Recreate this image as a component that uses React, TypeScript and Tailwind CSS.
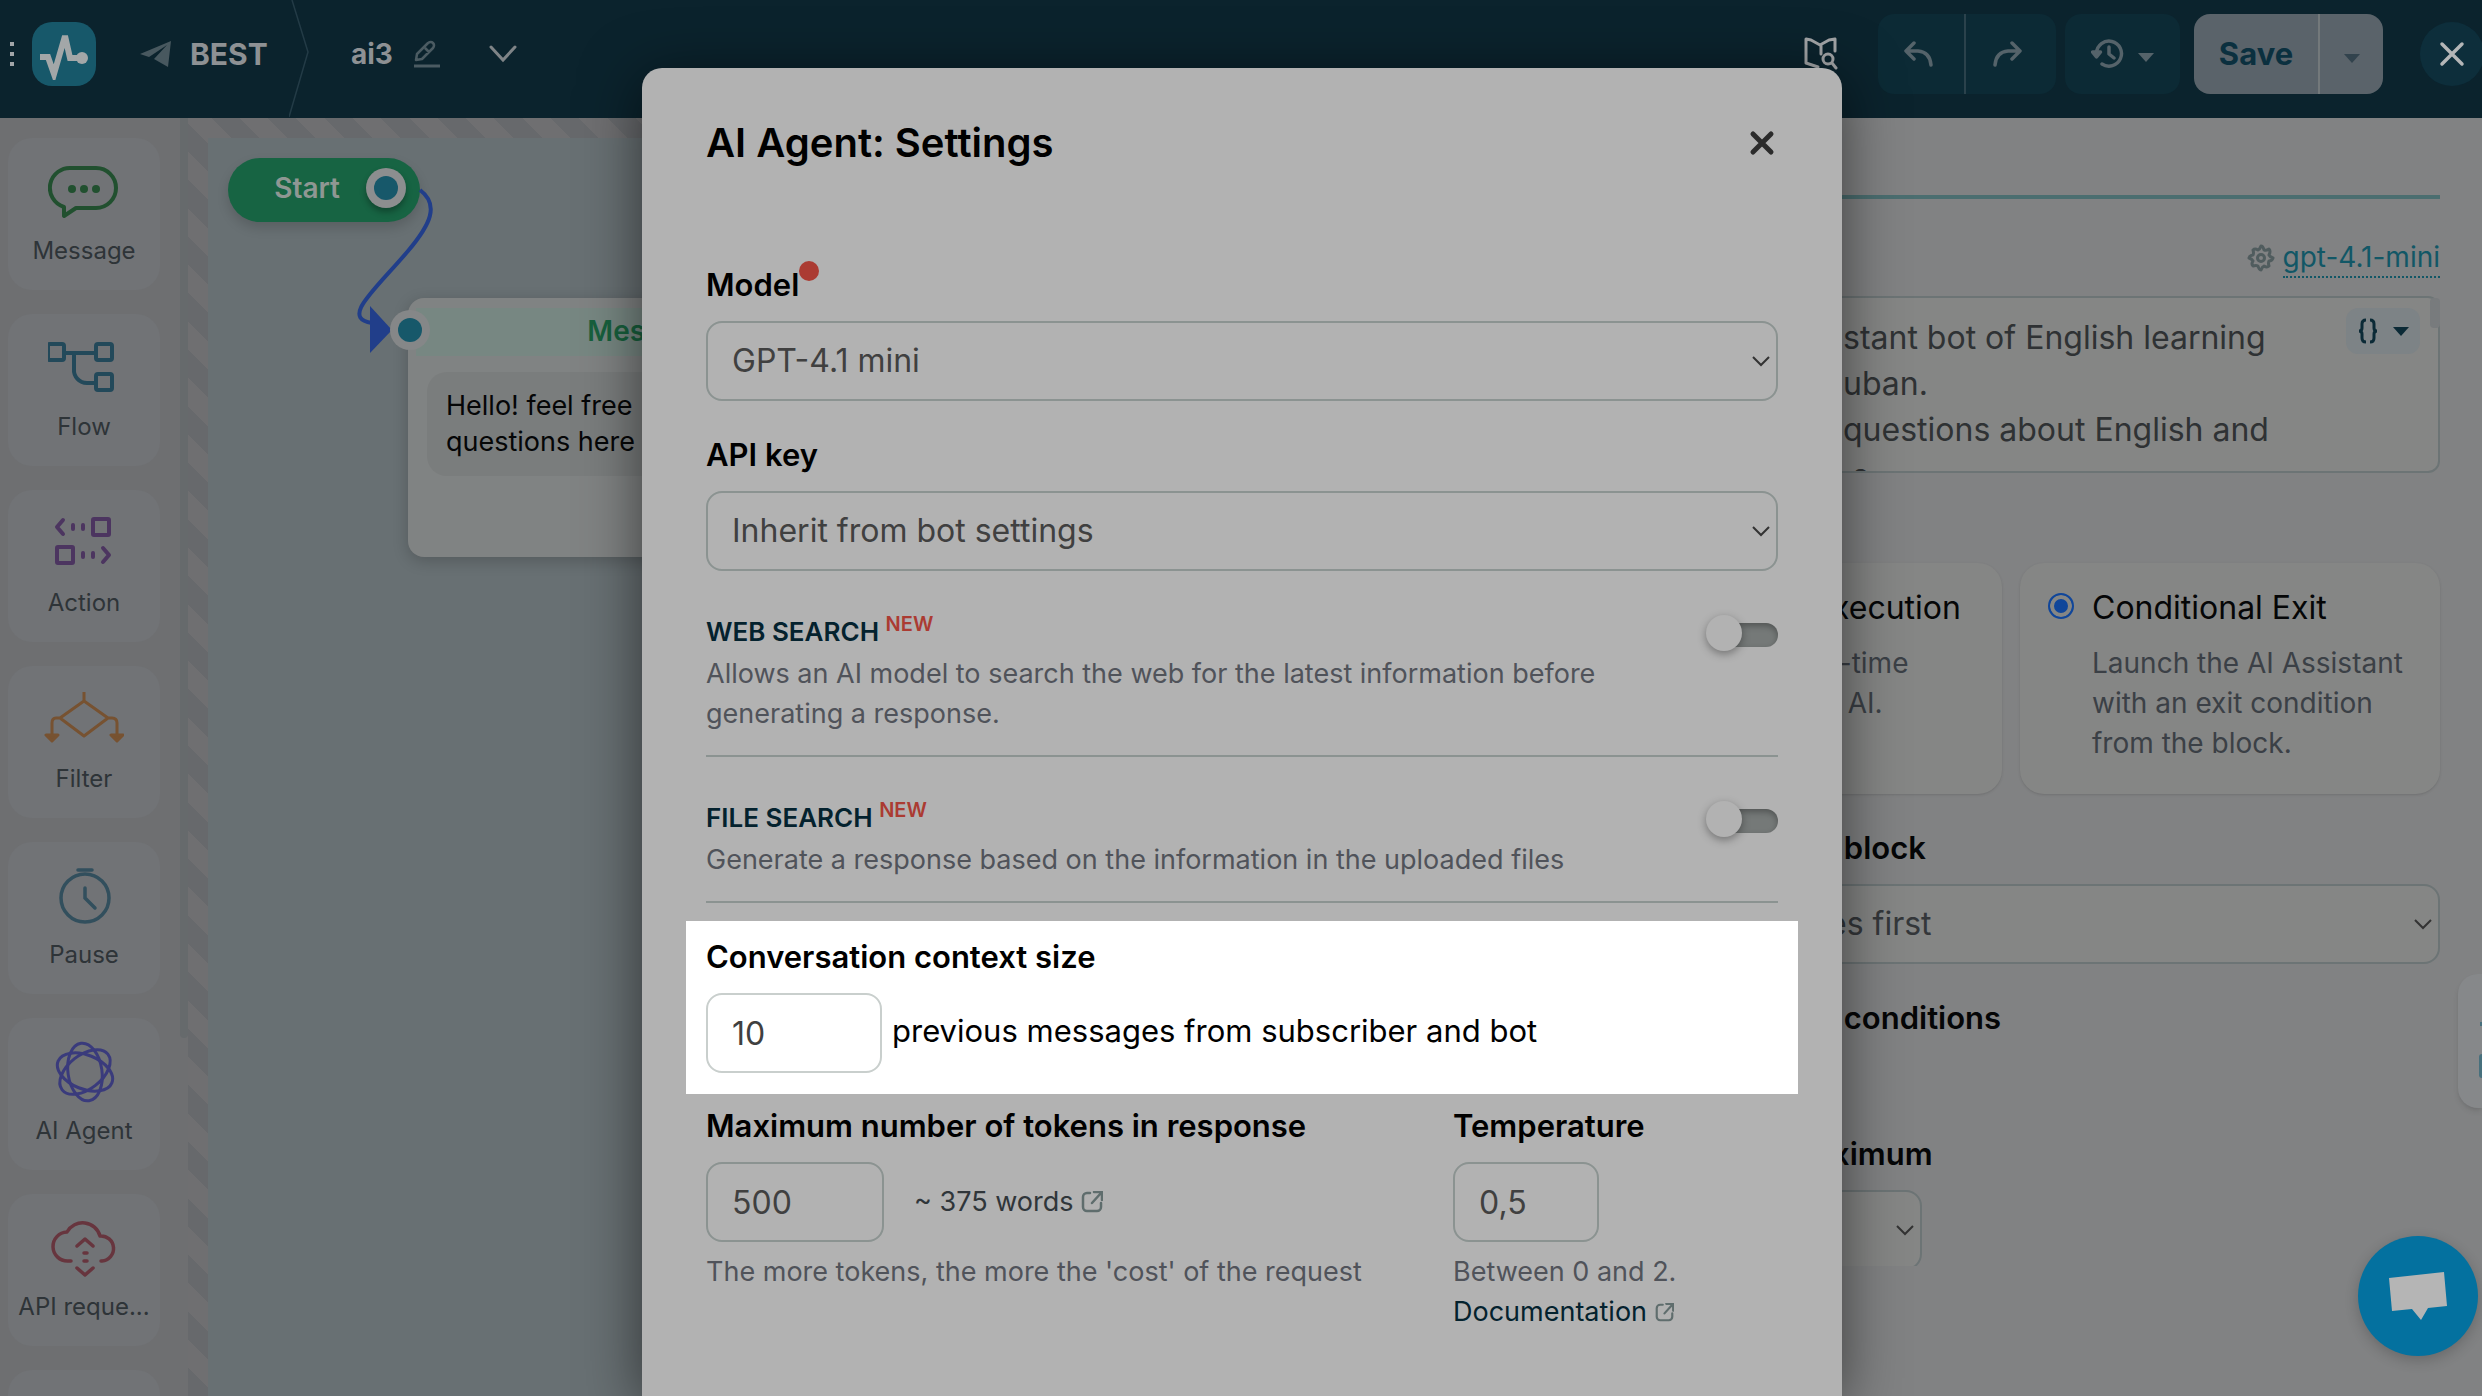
import type { ReactNode } from "react";

type Block = {
  label: string;
  icon: ReactNode;
};

const blocks: Block[] = [
  {
    label: "Message",
    icon: (
      <svg width="72" height="56" viewBox="0 0 72 56" fill="none" stroke="#21502f" strokeWidth="4" strokeLinejoin="round">
        <path d="M24 4h24a20 20 0 0 1 0 40H28l-12 8v-9A20 20 0 0 1 24 4z" />
        <g fill="#21502f" stroke="none">
          <circle cx="24" cy="25" r="4" />
          <circle cx="36" cy="25" r="4" />
          <circle cx="48" cy="25" r="4" />
        </g>
      </svg>
    ),
  },
  {
    label: "Flow",
    icon: (
      <svg width="72" height="56" viewBox="4 0 72 56" fill="none" stroke="#23495a" strokeWidth="4">
        <rect x="4" y="4" width="16" height="16" rx="2" />
        <rect x="52" y="4" width="16" height="16" rx="2" />
        <rect x="52" y="34" width="16" height="16" rx="2" />
        <path d="M20 13h32M30 13v16a13 13 0 0 0 13 14h9" />
      </svg>
    ),
  },
  {
    label: "Action",
    icon: (
      <svg width="72" height="56" viewBox="3 2 72 56" fill="none" stroke="#4c3560" strokeWidth="4" strokeLinecap="round" strokeLinejoin="round">
        <rect x="48" y="5" width="16" height="16" rx="1" />
        <rect x="12" y="33" width="16" height="16" rx="1" />
        <path d="M18 6l-6 7 6 7M28 11v4M38 11v4M38 39v4M48 39v4M58 34l6 7-6 7" />
      </svg>
    ),
  },
  {
    label: "Filter",
    icon: (
      <svg width="80" height="56" viewBox="0 2 80 56" fill="none" stroke="#775231" strokeWidth="3" strokeLinejoin="round">
        <path d="M40 0v12M16 28l24-17 24 17-24 18zM16 28h-4q-4 0-4 5v12M64 28h4q5 0 5 5v12" />
        <path d="M2 45h12l-6 6zM67 45h12l-6 6z" fill="#775231" />
      </svg>
    ),
  },
  {
    label: "Pause",
    icon: (
      <svg width="72" height="60" viewBox="0 0 72 60" fill="none" stroke="#324f5d" strokeWidth="3.5" strokeLinecap="round">
        <circle cx="37" cy="32" r="24" />
        <path d="M30 4h14M37 22v10l10 10" />
      </svg>
    ),
  },
  {
    label: "AI Agent",
    icon: (
      <svg width="64" height="64" viewBox="0 0 64 64" fill="none" stroke="#3a3b7c" strokeWidth="3">
        <ellipse cx="33" cy="32" rx="17" ry="29" transform="rotate(-8 33 32)" />
        <ellipse cx="33" cy="32" rx="17" ry="29" transform="rotate(52 33 32)" />
        <ellipse cx="33" cy="32" rx="17" ry="29" transform="rotate(112 33 32)" />
      </svg>
    ),
  },
  {
    label: "API reque...",
    icon: (
      <svg width="68" height="64" viewBox="-1 1 68 64" fill="none" stroke="#67353e" strokeWidth="3.5" strokeLinecap="round" strokeLinejoin="round">
        <path d="M20 46h-3a14 14 0 0 1-1-29 18 18 0 0 1 33 4 12.500 12.500 0 0 1 2 25h-1" />
        <path d="M26 31l8-7 8 7M33 38h3M33 46h3M26 53l8 7 8-7" />
      </svg>
    ),
  },
];

function Chevron({ className }: { className: string }) {
  return (
    <svg className={className} width="18" height="12" viewBox="0 0 18 12" fill="none" stroke="#333" strokeWidth="2">
      <path d="M1 1l8 8 8-8" />
    </svg>
  );
}

function Caret({ color }: { color: string }) {
  return (
    <svg width="16" height="9" viewBox="0 0 16 9" fill={color}>
      <path d="M0 0h16l-8 9z" />
    </svg>
  );
}

function ExternalIcon({ size }: { size: number }) {
  return (
    <svg width={size} height={size} viewBox="0 0 22 22" fill="none" stroke="#5f6d6d" strokeWidth="2.5" strokeLinecap="round" strokeLinejoin="round">
      <path d="M9 2H6a4 4 0 0 0-4 4v10a4 4 0 0 0 4 4h10a4 4 0 0 0 4-4v-4M13 1h8v8M20 2l-9 10" />
    </svg>
  );
}

function Header() {
  return (
    <header className="flex h-[118px] shrink-0 items-center bg-[#0b232d] pb-2.5 pl-2.5 text-[28px] font-bold text-[#8e9194]">
      <div className="flex w-1 flex-col gap-1.5">
        <span className="h-1 w-1 bg-[#a2a5a8]" />
        <span className="h-1 w-1 bg-[#a2a5a8]" />
        <span className="h-1 w-1 bg-[#a2a5a8]" />
      </div>
      <a href="#" aria-label="Home" className="ml-[18px] flex h-16 w-16 items-center justify-center rounded-[20px] bg-[#17586a]">
        <svg width="52" height="52" viewBox="0 0 52 52" fill="none" stroke="#a3a7a8" strokeWidth="6">
          <path d="M2 29h8l6 17 11-38 5 22h13" />
          <circle cx="44" cy="30" r="6" fill="#a3a7a8" stroke="none" />
        </svg>
      </a>
      <a href="#" className="ml-11 flex items-center gap-[18px]">
        <svg width="32" height="26" viewBox="0 0 32 26" fill="#48585f">
          <path d="M0 13L31 0l-3 26-14-8 13-14L9 16z" />
        </svg>
        <span className="w-[74px] text-[30px]">BEST</span>
      </a>
      <svg className="ml-[25px] h-[118px] w-5 self-start" viewBox="0 0 20 118" fill="none" stroke="#233b46" strokeWidth="1.5">
        <path d="M3 0l16 52L0 117" />
      </svg>
      <span className="ml-[42px] w-10">ai3</span>
      <button type="button" aria-label="Rename" className="ml-[22px]">
        <svg width="28" height="28" viewBox="0 0 28 28" fill="none" stroke="#4b5b62" strokeWidth="2.500" strokeLinejoin="round">
          <path d="M3 20l1-6L15 3q3-2 5 0t0 5L9 19zM12 8l4 4" />
          <path d="M1 26h26" strokeWidth="3" />
        </svg>
      </button>
      <button type="button" aria-label="More" className="ml-12">
        <svg width="28" height="18" viewBox="0 0 28 18" fill="none" stroke="#7f8487" strokeWidth="3" strokeLinecap="round">
          <path d="M2 2l12 13L26 2" />
        </svg>
      </button>

      <div className="ml-auto flex items-center">
        <button type="button" aria-label="Guide">
          <svg width="34" height="34" viewBox="0 0 34 34" fill="none" stroke="#a3a5a7" strokeWidth="3" strokeLinejoin="round" strokeLinecap="round">
            <path d="M14 30L2 26V2l5 1 9 5 9-5 6-1v12M17 8v9" />
            <circle cx="24" cy="22" r="5" />
            <path d="M28 26l4 5" />
          </svg>
        </button>
        <div className="ml-10 flex h-20 w-[178px] overflow-hidden rounded-2xl bg-[#0c2a35]">
          <button type="button" aria-label="Undo" className="flex flex-1 items-center justify-center border-r-2 border-[#2b424c] pr-1">
            <svg width="30" height="26" viewBox="0 0 30 26" fill="none" stroke="#55636a" strokeWidth="3.5" strokeLinecap="round" strokeLinejoin="round">
              <path d="M10 2L2 10l8 8M2 10h12q12 1 13 14" />
            </svg>
          </button>
          <button type="button" aria-label="Redo" className="flex flex-1 items-center justify-center pr-2">
            <svg width="30" height="26" viewBox="0 0 30 26" fill="none" stroke="#55636a" strokeWidth="3.5" strokeLinecap="round" strokeLinejoin="round">
              <path d="M20 2l8 8-8 8M28 10H16Q4 11 3 24" />
            </svg>
          </button>
        </div>
        <button type="button" aria-label="History" className="ml-[9px] flex h-20 w-[115px] items-center justify-center gap-3.5 rounded-2xl bg-[#0c2a35]">
          <svg width="33" height="30" viewBox="0 0 33 30" fill="none" stroke="#55636a" strokeWidth="3.5" strokeLinecap="round" strokeLinejoin="round">
            <path d="M5.500 14A12.500 12.500 0 1 1 11 25M18 8v7l5 4" />
            <path d="M1.500 13h8l-4 5z" fill="#55636a" />
          </svg>
          <span className="pt-1.5">
            <Caret color="#55636a" />
          </span>
        </button>
        <div className="ml-3.5 flex h-20 w-[189px] overflow-hidden rounded-2xl bg-[#5a636a]">
          <button type="button" className="w-[126px] border-r-2 border-[#73797b] text-[31px] text-[#0b303f]">
            Save
          </button>
          <button type="button" aria-label="Save options" className="flex flex-1 items-center justify-center pt-2">
            <Caret color="#32434d" />
          </button>
        </div>
        <button type="button" aria-label="Close" className="-mr-0.5 ml-[37px] flex h-16 w-16 items-center justify-center rounded-full bg-[#0d2e3b]">
          <svg width="26" height="26" viewBox="0 0 26 26" stroke="#b4b6b7" strokeWidth="3.5" strokeLinecap="round">
            <path d="M3 3l20 20M23 3L3 23" />
          </svg>
        </button>
      </div>
    </header>
  );
}

function Sidebar() {
  return (
    <nav className="relative w-[188px] shrink-0 overflow-hidden bg-[#6e6f71]">
      <ul className="flex flex-col gap-6 py-5 pl-2">
        {blocks.map((b) => (
          <li key={b.label}>
            <button type="button" className="flex h-[152px] w-[152px] flex-col items-center rounded-3xl bg-[#717376] pt-4 text-[24px] text-[#2e3438]">
              <span className="flex h-[75px] items-center">{b.icon}</span>
              <span className="mt-0.5 leading-10">{b.label}</span>
            </button>
          </li>
        ))}
        <li className="h-[152px] w-[152px] rounded-3xl bg-[#717376]" />
      </ul>
      <div className="absolute top-0 right-0 h-[920px] w-2 rounded-b bg-[#666a6c]" />
    </nav>
  );
}

function Canvas() {
  return (
    <section className="min-w-0 flex-1 bg-[repeating-linear-gradient(45deg,#67696c_0_20px,#6f6f71_20px_40px)] pt-5 pl-5">
      <div className="relative h-full bg-[#687073]">
        <div className="absolute top-5 left-5 flex h-16 w-48 items-center justify-end gap-[26px] rounded-full bg-[#176443] pr-3.5 pb-1 shadow-[0_6px_12px_rgba(0,0,0,0.15)]">
          <span className="text-[28px] font-semibold text-[#8f9793]">Start</span>
          <span className="flex h-10 w-10 items-center justify-center rounded-full bg-[#8c8e8f] shadow-[0_4px_6px_rgba(0,0,0,0.3)]">
            <span className="h-6 w-6 rounded-full bg-[#17586a]" />
          </span>
        </div>
        <div className="absolute top-40 left-50 h-[259px] w-[474px] rounded-2xl bg-[#808383] pt-2.5 shadow-[0_4px_16px_rgba(0,0,0,0.2)]">
          <h2 className="ml-2 h-12 bg-[#778782] text-center text-[28px] leading-[46px] font-semibold text-[#17603d]">
            Message
          </h2>
          <p className="mx-[19px] mt-4 rounded-[20px] bg-[#7a7d7d] px-[19px] py-4 text-[27px] leading-9 text-[#050607]">
            Hello! feel free
            <br />
            questions here
          </p>
        </div>
        <svg className="absolute top-0 left-0" width="260" height="240" viewBox="208 138 260 240" fill="none">
          <path d="M420 190C440 205 430 225 408 251 375 290 340 318 372 323" stroke="#213e8a" strokeWidth="4" />
          <path d="M370 306l22 24-22 23z" fill="#213e8a" />
          <circle cx="410" cy="330" r="20" fill="#858788" />
          <circle cx="410" cy="330" r="12" fill="#17586a" />
        </svg>
      </div>
    </section>
  );
}

function ExitPanel() {
  return (
    <aside className="relative w-[942px] shrink-0 bg-[#818283] px-[42px] text-[31px]">
      <div className="h-[81px] border-b-4 border-[#4b6e70]" />
      <div className="mt-[39px] flex items-center justify-end gap-2 text-[28px]">
        <svg width="28" height="28" viewBox="0 0 28 28" fill="none" stroke="#505c5e" strokeWidth="3" strokeLinejoin="round">
          <path d="M14 2q2 0 3 4 2 1 5-1 2 2 0 6 1 2 4 3-1 3-4 3-1 2 0 5-2 2-5 0-2 1-3 4-2 0-3-4-2-1-5 0-2-2 0-5-1-2-4-3 1-3 4-3 1-2 0-5 2-2 5 0 2-1 3-4z" />
          <circle cx="14" cy="14" r="3.500" />
        </svg>
        <a href="#" className="border-b-2 border-dotted border-[#125766] leading-[38px] text-[#125766]">
          gpt-4.1-mini
        </a>
      </div>
      <div className="relative mt-[18px]">
        <textarea
          aria-label="Instructions"
          className="block h-[177px] w-full resize-none overflow-hidden rounded-xl border-2 border-[#6c7475] bg-[#858685] pt-[17px] pl-[259px] text-[32px] leading-[46px] whitespace-pre text-[#2f3234]"
          defaultValue={"stant bot of English learning\nuban.\nquestions about English and\n s"}
        />
        <button type="button" aria-label="Insert variable" className="absolute top-3 right-5 flex h-[46px] w-[74px] items-center justify-center gap-3.5 rounded-xl bg-[#7d8386]">
          <svg width="22" height="26" viewBox="0 0 22 26" fill="none" stroke="#0b2a36" strokeWidth="3">
            <path d="M9 2Q5 2 5 6v4q0 3-3 3 3 0 3 3v4q0 4 4 4M13 2q4 0 4 4v4q0 3 3 3-3 0-3 3v4q0 4-4 4" />
          </svg>
          <Caret color="#0b2a36" />
        </button>
        <span className="absolute top-0.5 right-0 h-[30px] w-2.5 rounded bg-[#787b7d]" />
      </div>

      <div className="mt-[90px] grid grid-cols-2 gap-[18px]">
        <div className="h-[231px] rounded-3xl bg-[#858685] pt-[25px] pl-[250px] shadow-sm">
          <p className="text-[32px] leading-10 text-[#050607]">xecution</p>
          <p className="mt-[15px] text-[28px] leading-10 text-[#3b4046]">
            l-time
            <br />
            &nbsp;&nbsp;AI.
          </p>
        </div>
        <div className="flex h-[231px] gap-[18px] rounded-3xl bg-[#858685] pt-[25px] pl-7 shadow-sm">
          <input
            id="conditional-exit"
            type="radio"
            name="mode"
            defaultChecked
            className="mt-[5px] h-[26px] w-[26px] shrink-0 appearance-none rounded-full border-2 border-[#10469a] bg-[#10469a] shadow-[inset_0_0_0_4px_#858685]"
          />
          <div>
            <label htmlFor="conditional-exit" className="block text-[32px] leading-10 text-[#050607]">
              Conditional Exit
            </label>
            <p className="mt-[15px] text-[28px] leading-10 text-[#3b4046]">
              Launch the AI Assistant
              <br />
              with an exit condition
              <br />
              from the block.
            </p>
          </div>
        </div>
      </div>

      <label htmlFor="order" className="mt-[34px] block pl-[254px] leading-10 font-semibold text-[#050607]">
        &nbsp;block
      </label>
      <div className="relative mt-4">
        <select id="order" className="h-20 w-full appearance-none rounded-2xl border-2 border-[#6c7475] bg-[#858685] pl-[244px] text-[32px] text-[#34373a]">
          <option>es first</option>
        </select>
        <Chevron className="pointer-events-none absolute top-[35px] right-2" />
      </div>
      <h3 className="mt-[34px] pl-[254px] leading-10 font-semibold text-[#050607]">&nbsp;conditions</h3>
      <label htmlFor="maximum" className="mt-24 block pl-[250px] leading-10 font-semibold text-[#050607]">
        ximum
      </label>
      <div className="relative mt-4 h-[76px] w-[340px] overflow-hidden">
        <select id="maximum" className="h-20 w-full appearance-none rounded-2xl border-2 border-[#6c7475] bg-[#858685]" />
        <Chevron className="pointer-events-none absolute top-[35px] right-2" />
      </div>

      <div className="absolute top-[856px] right-0 h-[134px] w-6 rounded-l-[20px] bg-[#86888a] shadow-md">
        <span className="absolute top-12 right-0 h-1 w-0.5 bg-[#47707d]" />
        <span className="absolute top-20 right-0 h-6 w-[3px] rounded-l bg-[#47707d]" />
      </div>
    </aside>
  );
}

type SearchRowProps = {
  id: string;
  title: string;
  text: ReactNode;
};

function SearchRow({ id, title, text }: SearchRowProps) {
  return (
    <div className="mt-[41px] flex items-start justify-between border-b-2 border-[#8b9391] pb-[21px]">
      <div>
        <label htmlFor={id} className="block text-[26px] leading-10 font-semibold text-[#04222e]">
          {title} <sup className="top-[-10px] text-xl leading-none font-semibold text-[#ab3b32]">NEW</sup>
        </label>
        <p className="mt-0.5 text-[27px] leading-10 text-[#50535a]">{text}</p>
      </div>
      <input
        id={id}
        type="checkbox"
        role="switch"
        className="relative mt-[11px] h-6 w-[68px] shrink-0 appearance-none rounded-full bg-[#757978] shadow-[inset_0_3px_6px_rgba(0,0,0,0.3)] before:absolute before:-top-2 before:-left-1 before:h-9 before:w-9 before:rounded-full before:bg-[#b2b2b2] before:shadow-[0_3px_8px_rgba(0,0,0,0.35)]"
      />
    </div>
  );
}

const fieldClass = "h-20 rounded-2xl border-2 bg-transparent px-6 text-[32px] text-[#404040]";
const headingClass = "block text-[31px] leading-10 font-semibold text-black";

function SettingsModal() {
  return (
    <div className="absolute inset-0 flex justify-center pt-[68px] pl-0.5">
      <div role="dialog" aria-label="AI Agent: Settings" className="w-[1200px] rounded-t-[20px] bg-[#b2b2b2] px-16 pt-[51px] shadow-[0_10px_60px_rgba(0,0,0,0.55)]">
        <div className="flex h-12 items-center justify-between">
          <h1 className="text-[40px] font-semibold text-black">AI Agent: Settings</h1>
          <button type="button" aria-label="Close settings" className="flex h-8 w-8 items-center justify-center">
            <svg width="26" height="26" viewBox="0 0 26 26" stroke="#2b2b2b" strokeWidth="5" strokeLinecap="round">
              <path d="M4 4l18 18M22 4L4 22" />
            </svg>
          </button>
        </div>

        <label htmlFor="model" className="mt-[98px] flex text-[31px] leading-10 font-semibold text-black">
          Model
          <span className="-mt-1 h-5 w-5 rounded-full bg-[#ab3b32]" />
        </label>
        <div className="relative mt-4">
          <select id="model" className={`${fieldClass} w-full appearance-none border-[#8b9391]`}>
            <option>GPT-4.1 mini</option>
          </select>
          <Chevron className="pointer-events-none absolute top-[35px] right-2" />
        </div>

        <label htmlFor="api-key" className={`${headingClass} mt-[34px]`}>
          API key
        </label>
        <div className="relative mt-4">
          <select id="api-key" className={`${fieldClass} w-full appearance-none border-[#8b9391]`}>
            <option>Inherit from bot settings</option>
          </select>
          <Chevron className="pointer-events-none absolute top-[35px] right-2" />
        </div>

        <SearchRow
          id="web-search"
          title="WEB SEARCH"
          text={
            <>
              Allows an AI model to search the web for the latest information before
              <br />
              generating a response.
            </>
          }
        />
        <SearchRow id="file-search" title="FILE SEARCH" text="Generate a response based on the information in the uploaded files" />

        <div className="-mx-5 mt-[18px] bg-white px-5 pt-4 pb-[21px]">
          <label htmlFor="context-size" className={headingClass}>
            Conversation context size
          </label>
          <div className="mt-4 flex items-center gap-2.5 text-[31px] text-black">
            <input id="context-size" defaultValue="10" className={`${fieldClass} w-44 border-[#c9cfcd]`} />
            <span className="pb-1">previous messages from subscriber and bot</span>
          </div>
        </div>

        <div className="mt-3 grid grid-cols-[747px_1fr] text-[27px] leading-10 text-[#50535a]">
          <div>
            <label htmlFor="tokens" className={headingClass}>
              Maximum number of tokens in response
            </label>
            <div className="mt-4 flex items-center gap-[30px]">
              <input id="tokens" defaultValue="500" className={`${fieldClass} w-[178px] border-[#8b9391]`} />
              <a href="#" className="flex items-center gap-2 text-[#30363a]">
                ~ 375 words <ExternalIcon size={22} />
              </a>
            </div>
            <p className="mt-2.5">The more tokens, the more the 'cost' of the request</p>
          </div>
          <div>
            <label htmlFor="temperature" className={headingClass}>
              Temperature
            </label>
            <input id="temperature" defaultValue="0,5" className={`${fieldClass} mt-4 block w-[146px] border-[#8b9391]`} />
            <p className="mt-2.5">Between 0 and 2.</p>
            <a href="#" className="flex items-center gap-2 text-[#04222e]">
              Documentation <ExternalIcon size={19} />
            </a>
          </div>
        </div>
      </div>
    </div>
  );
}

export default function App() {
  return (
    <div className="relative flex h-screen flex-col overflow-hidden font-['Inter',sans-serif]">
      <Header />
      <main className="flex min-h-0 flex-1">
        <Sidebar />
        <Canvas />
        <ExitPanel />
      </main>
      <SettingsModal />
      <button type="button" aria-label="Open chat" className="absolute right-1 bottom-10 flex h-30 w-30 items-center justify-center rounded-full bg-[#04719f] shadow-[0_4px_14px_rgba(0,0,0,0.2)]">
        <svg width="60" height="50" viewBox="0 0 60 50" fill="#b5b5b5">
          <path d="M1 7L56 1l3 34-19 2-7 12-9-11-20 2z" />
        </svg>
      </button>
    </div>
  );
}
